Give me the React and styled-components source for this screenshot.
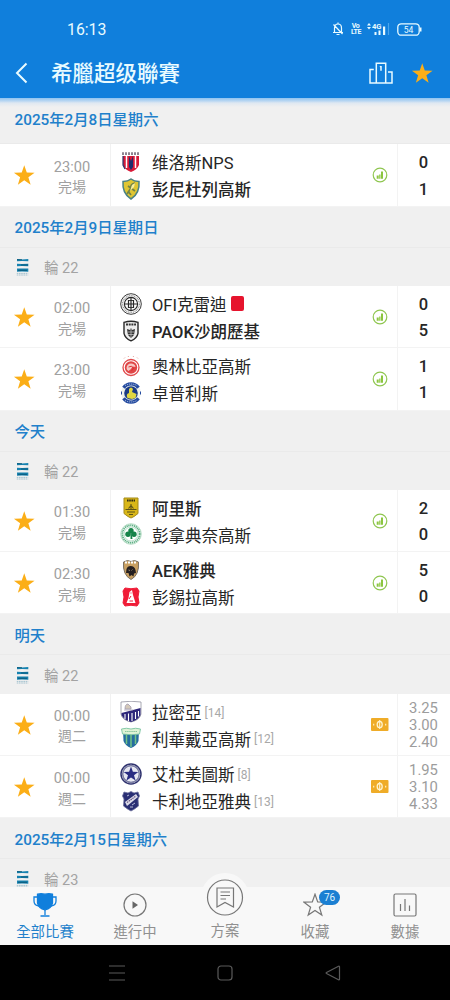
import React from 'react';

import styled, { createGlobalStyle } from 'styled-components';

const GlobalStyle = createGlobalStyle`
    * {
        box-sizing: border-box;
    }
    body {
        margin: 0;
        background: #000;
        font-family: Roboto, "Noto Sans CJK TC", sans-serif;
    }
    svg {
        display: block;
        flex: none;
    }
`;

const Phone = styled.div`
    display: flex;
    flex-direction: column;
    width: 450px;
    height: 1000px;
    overflow: hidden;
    background: #000;
`;

const Header = styled.header`
    flex: none;
    height: 98px;
    background: #107fdc;
    color: #e9fbff;
`;

const StatusBar = styled.div`
    display: flex;
    align-items: center;
    height: 58px;
    padding: 0 28px 0 67px;
`;

const Clock = styled.span`
    flex: 1;
    padding-top: 1px;
    font-size: 15.8px;
    line-height: 20px;
`;

const StatusIcons = styled.div`
    display: flex;
    align-items: center;
    gap: 7px;
`;

const VoLte = styled.span`
    width: 9px;
    font-size: 7px;
    line-height: 6.5px;
    font-weight: 700;
    text-align: center;
    letter-spacing: -0.4px;
`;

const TitleBar = styled.div`
    display: flex;
    align-items: center;
    height: 30px;
    padding: 0 17px 0 14px;
`;

const Title = styled.h1`
    flex: 1;
    margin: 0 0 0 22px;
    padding-top: 2px;
    font-size: 21.5px;
    line-height: 30px;
    font-weight: 500;
`;

const HeaderActions = styled.div`
    display: flex;
    align-items: center;
    gap: 18px;
`;

const List = styled.main`
    flex: none;
    height: 789px;
    overflow: hidden;
    background: #fff;
`;

const DateRow = styled.div`
    display: flex;
    align-items: center;
    height: ${props => (props.$first ? '46.4px' : '41px')};
    padding: ${props => (props.$first ? '0 14.5px 1px' : '3px 14.5px 0')};
    background: ${props => (props.$first
        ? 'linear-gradient(#8fc3f0 0, #b9d7f2 3px, #dfe8f1 5px, #f0f0f0 9px)'
        : '#f0f0f0')};
    border-bottom: 1px solid #eaeaea;
    color: #2180cb;
    font-size: 15.3px;
    line-height: 20px;
    font-weight: 500;
`;

const RoundRow = styled.div`
    display: flex;
    align-items: center;
    gap: 15px;
    height: 38.4px;
    padding-left: 16px;
    background: #f0f0f0;
    color: #a3a3a3;
    font-size: 14.5px;
    line-height: 16px;
`;

const RoundName = styled.span`
    padding-top: 4px;
`;

const Match = styled.div`
    display: flex;
    height: 62.25px;
    background: #fff;
    border-bottom: 1px solid #f3f3f3;
`;

const StarCell = styled.div`
    display: flex;
    align-items: center;
    justify-content: center;
    width: 48px;
    padding-top: 1px;
`;

const TimeCell = styled.div`
    display: flex;
    flex-direction: column;
    justify-content: center;
    width: 63px;
    padding: 4px 14px 0 0;
    border-right: 1px solid #f1f1f1;
    color: #a0a0a0;
    font-size: 14.6px;
    line-height: 20.5px;
    text-align: center;
`;

const State = styled.span`
    font-size: 14px;
`;

const Teams = styled.div`
    display: flex;
    flex: 1;
    flex-direction: column;
    justify-content: center;
    padding: 1px 0 0 9px;
`;

const Team = styled.div`
    display: flex;
    align-items: center;
    height: 26.7px;
    color: #262626;
    font-size: 16.5px;
    line-height: 24px;
    font-weight: ${props => (props.$winner ? 500 : 400)};
    white-space: nowrap;
`;

const TeamName = styled.span`
    margin-left: 10px;
    padding-top: 4.5px;
`;

const Rank = styled.span`
    margin-left: 3px;
    padding-top: 2px;
    color: #a8a8a8;
    font-size: 12px;
`;

const RedCard = styled.i`
    width: 13px;
    height: 15px;
    margin-left: 5px;
    border-radius: 2px;
    background: #e6142d;
`;

const IconCell = styled.div`
    display: flex;
    align-items: center;
    justify-content: center;
    width: 34px;
`;

const ResultCell = styled.div`
    display: flex;
    flex-direction: column;
    align-items: center;
    justify-content: center;
    width: 53px;
    padding: ${props => (props.$odds ? '2px 1px 0 0' : '3px 1px 0 0')};
    border-left: 1px solid #f3f3f3;
    color: ${props => (props.$odds ? '#9c9c9c' : '#262626')};
    font-size: ${props => (props.$odds ? '14.8px' : '16.5px')};
    line-height: ${props => (props.$odds ? '17px' : '26.5px')};
    font-weight: ${props => (props.$odds ? 400 : 500)};
`;

const TabBar = styled.nav`
    position: relative;
    display: flex;
    flex: none;
    height: 58px;
    background: #f8f8f8;
`;

const Tab = styled.div`
    display: flex;
    flex: 1;
    flex-direction: column;
    align-items: center;
    gap: 3px;
    padding-top: 6px;
    color: ${props => (props.$active ? '#2180cb' : '#909090')};
    font-size: 14.4px;
    line-height: 26px;
`;

const TabIcon = styled.div`
    position: relative;
    height: 25px;
`;

const Badge = styled.span`
    position: absolute;
    top: -3px;
    left: 16px;
    width: 21px;
    border-radius: 8px;
    background: #1b7fd2;
    color: #dff3ff;
    font-size: 10px;
    line-height: 15px;
    text-align: center;
`;

const RaisedIcon = styled.div`
    position: absolute;
    left: -24px;
    top: -20px;
    border-radius: 50%;
    background: #f8f8f8;
`;

const SystemBar = styled.footer`
    display: flex;
    flex: 1;
    align-items: center;
    justify-content: center;
    gap: 92px;
    background: #000;
`;

const STAR = 'M12 1.2l2.7 7.8 8.3.2-6.6 5 2.4 7.9-6.8-4.7-6.8 4.7 2.4-7.9-6.6-5 8.3-.2z';

function Star({ size = 22.5 }) {
    return (
        <svg width={size} height={size} viewBox='0 0 24 24'>
            <path d={STAR} fill='#fbae17' />
        </svg>
    );
}

function Podium() {
    return (
        <svg width='24' height='22' viewBox='0 0 24 22' fill='none' stroke='currentColor' strokeWidth='1.5'>
            <path d='M7.300 21V1.200h9.400V21M4.800 7.500H1V21h22V10h-4M12 4v4.800M12 4.300l-1 .8' />
        </svg>
    );
}

function StatsIcon() {
    return (
        <svg width='16' height='16' viewBox='0 0 16 16'>
            <circle cx='8' cy='8' r='6.8' fill='none' stroke='#8fc650' strokeWidth='1.2' />
            <path d='M4.700 8.600h2v3.200h-2zM7.200 7.400h1.300v4.400H7.200zM9 4.600h2v7.200H9z' fill='#8bc53f' />
        </svg>
    );
}

function CashIcon() {
    return (
        <svg width='19' height='13' viewBox='0 0 19 13'>
            <rect x='0' width='17.500' height='13' rx='1' fill='#efac28' />
            <ellipse cx='8.700' cy='6.500' rx='2.500' ry='3.200' fill='none' stroke='#fff4cf' strokeWidth='1.300' />
            <path d='M8.700 2v9M2.700 5.700v1.800M14.700 5.700v1.800' stroke='#fff4cf' strokeWidth='1.100' />
        </svg>
    );
}

function LeagueLogo() {
    return (
        <svg width='13' height='18' viewBox='0 0 13 18'>
            <path d='M1 1l5 .4L12.300 1v2.300L6 3l-5 .3zM1 5.800l5 .3 6.300-.3v2.400l-6.300-.3-5 .3zM1 10.600l5-.2 6.300.2v3.200l-6.300-.4-5 .4z' fill='#1682b0' />
            <path d='M1 1.700h5M5 7h7M2 12.300h9' stroke='#07506f' strokeWidth='.8' />
            <path d='M.8 15.400h11.400M.8 17h11.400' stroke='#9bbccb' strokeWidth='.9' strokeDasharray='1.6 .6' />
        </svg>
    );
}

const crests = {
    volos: (
        <>
            <path d='M3 5h16v9q-2 5-8 7-6-2-8-7z' fill='#d81a38' />
            <path d='M6.500 5v12M15.500 5v12' stroke='#fff' strokeWidth='1.500' />
            <path d='M9 5l2 5 2-5v11l-2 3-2-3z' fill='#1e2d6c' />
            <path d='M3 5v9l2 4' stroke='#28366d' strokeWidth='1.2' fill='none' />
            <path d='M2 2.700h18' stroke='#8d8490' strokeWidth='2.800' strokeDasharray='2 1' />
        </>
    ),
    panetolikos: (
        <>
            <path d='M3 3.500q5-.2 8-2.500 3 2.300 8 2.500 1 12-8 17.500-9-5.500-8-17.500z' fill='#dfc632' stroke='#4a8283' strokeWidth='1.500' />
            <path d='M15 5q-5 1-4 5l-4 6M8 8l7 5M8 13l3 4' stroke='#718347' strokeWidth='1.700' fill='none' />
            <path d='M12 7l3-2-1 4-4 4z' fill='#f7f0a0' />
        </>
    ),
    ofi: (
        <g fill='none' stroke='#272727'>
            <circle cx='11' cy='11' r='10.300' strokeWidth='.9' />
            <circle cx='11' cy='11' r='8.400' strokeWidth='1.400' strokeDasharray='1 .7' stroke='#999' />
            <circle cx='11' cy='11' r='6.600' strokeWidth='1.100' />
            <path d='M11 5v12M8.500 7v8M13.500 7v8M5 11h12' strokeWidth='1.200' />
            <path d='M8.500 7.500h5M8.500 14.500h5' strokeWidth='.9' />
        </g>
    ),
    paok: (
        <>
            <path d='M4 2.300q7-2.200 14 0v11q-1 5-7 7.500-6-2.500-7-7.500z' fill='#eee' stroke='#292929' strokeWidth='1.400' />
            <path d='M6 4.500h10' stroke='#333' strokeWidth='2.200' strokeDasharray='2 .7' />
            <path d='M7 9l3 1 1-2 1 2 3-1-1 6-3 3-3-3z' fill='#333' />
            <path d='M8 12h6M8 14.500h6M11 9v9' stroke='#ccc' strokeWidth='.7' />
        </>
    ),
    olympiacos: (
        <>
            <circle cx='11' cy='12.500' r='8' fill='#fff' stroke='#e0484a' strokeWidth='1.300' />
            <circle cx='11' cy='12.500' r='6.200' fill='#e04646' />
            <path d='M6.500 13q.5-4.500 4.500-4.500t4.500 3.500l-3-.5-1.500 2.500-2.500 2q-2-1-2-3z' fill='#f6c9c5' />
            <path d='M8.500 12q3-2 5 1l-2 3' stroke='#dc3137' fill='none' />
            <path d='M4 3.500l1-1M8 2l.7-1M13 1l.8 1M17 2.500l1 1' stroke='#e8a7a0' />
        </>
    ),
    asteras: (
        <>
            <circle cx='11' cy='11' r='10' fill='#eef2ed' />
            <path d='M3.600 5.800a9 9 0 0 1 14.800 0M3.600 16.200a9 9 0 0 0 14.800 0' fill='none' stroke='#244ba0' strokeWidth='3.400' />
            <path d='M1.500 9.500v3M20.500 9.500v3' stroke='#244ba0' />
            <circle cx='11' cy='11' r='6.800' fill='#193a85' />
            <path d='M7.500 16q-2-4 1.500-5V7q2-3 4 0l-1 3 4.500 2-1 4-3.500 1z' fill='#e0d741' />
            <path d='M5 3.500q6-3 12 0M5 18.500q6 3 12 0' stroke='#c6d2e9' strokeDasharray='1 1' fill='none' />
        </>
    ),
    aris: (
        <>
            <path d='M4 1h14v15.500l-4 3-3 1.500-3-1.500-4-3z' fill='#d9b719' stroke='#a38a1b' />
            <path d='M7 3.500h8' stroke='#302d13' strokeWidth='1.800' strokeDasharray='1.600 .6' />
            <path d='M5.500 12.500h11M11 7v5M8.500 11.500l2.500-3 2.500 3M7 15h8M9 17.500h4' stroke='#5b5218' strokeWidth='1.100' fill='none' />
        </>
    ),
    panathinaikos: (
        <>
            <circle cx='11' cy='11' r='10.300' fill='#fff' stroke='#a6d4b8' strokeWidth='.8' />
            <circle cx='11' cy='11' r='8.700' fill='none' stroke='#5fb186' strokeWidth='1.900' strokeDasharray='1.300 .6' />
            <circle cx='11' cy='11' r='7' fill='#fff' stroke='#8cc7a6' strokeWidth='.6' />
            <g fill='#168349'>
                <circle cx='11' cy='7.800' r='2.700' />
                <circle cx='8' cy='11.200' r='2.700' />
                <circle cx='14' cy='11.200' r='2.700' />
                <path d='M10.500 10h1l1 6h-2z' />
            </g>
        </>
    ),
    aek: (
        <>
            <path d='M3.500 3l4-1.500 3.500 1 3.500-1 4 1.500q1 13-7.500 17.500-8.500-4.500-7.500-17.500z' fill='#c9a061' stroke='#7a6f62' />
            <path d='M5 3.500h12' stroke='#fff' strokeWidth='2' strokeDasharray='2 1' />
            <path d='M6.500 10q1-3 4-3 4 0 5 4l.5 3-2 .5-.5 3-2-1.500-2 1.500-1-3.500-2.500 0z' fill='#241f20' />
            <path d='M8.500 11l1.500.5M12.500 10.500l-1 1' stroke='#ccb58c' strokeWidth='.7' />
        </>
    ),
    panserraikos: (
        <>
            <path d='M5 2q6 1.500 12 0l2 3-1 6 1 6-2 3q-6-1.500-12 0l-2-3 1-6-1-6z' fill='#f01c37' stroke='#f01c37' strokeLinejoin='round' />
            <path d='M9.500 6l2.500-2 1 5 2.500 8h-9l2-5z' fill='#fff' />
            <path d='M9 13l2-3M9.500 15h3.500M10.500 7h1' stroke='#ee1c37' />
        </>
    ),
    lamia: (
        <>
            <path d='M1 1q10-1.500 20 0v12q-1 6-10 8-9-2-10-8z' fill='#fff' stroke='#9292a0' strokeWidth='.8' />
            <path d='M1.500 12l19-5v7q-2 5-9.500 7-7.500-2-9.500-7z' fill='#2d267b' />
            <path d='M5 13v5M8.500 12.500v7.500M12 12v8M15.500 11v7M18.500 10v5.500' stroke='#fff' strokeWidth='1.100' />
            <path d='M5 8q0-5 3-5l3 3v2zM4 9h9' stroke='#a29cb0' fill='#d4c8b8' strokeWidth='.8' />
        </>
    ),
    levadiakos: (
        <>
            <path d='M3 3h16l-.5 11q-1.500 4.500-7.500 7-6-2.500-7.500-7z' fill='#256d9e' />
            <path d='M1.500 2q5-1.500 9.500 0 4.500-1.500 9.500 0L19.500 7q-8 1.500-17 0z' fill='#dff3d6' stroke='#7bc4a1' strokeWidth='.9' />
            <path d='M6.500 8v9M11 8v12M15.500 8v9' stroke='#72c486' strokeWidth='1.500' />
            <path d='M5 4.500h12' stroke='#8bc59d' strokeDasharray='1.500 .6' />
        </>
    ),
    atromitos: (
        <>
            <circle cx='11' cy='11' r='10' fill='#fff' stroke='#30336f' strokeWidth='1.500' />
            <circle cx='11' cy='11' r='8.300' fill='none' stroke='#7d80a5' strokeWidth='1.700' />
            <circle cx='11' cy='11' r='7.200' fill='#e6e7f1' />
            <path d='M11 3.500l1.900 5.200 5.400.2-4.300 3.400 1.600 5.300-4.600-3.100-4.600 3.100L8 12.300 3.700 8.900l5.400-.2z' fill='#292c82' />
        </>
    ),
    kallithea: (
        <>
            <path d='M4 2l4 1 3-1.500L14 3l4-1 1.500 4-1.500 3 .5 7-4 3-3.500 2-3.500-2-4-3L4 9 2.500 6z' fill='#292e73' stroke='#696d9b' strokeWidth='.8' />
            <path d='M5 12L16 4l2 3-11 9z' fill='#dcdce9' />
            <path d='M7 12.500l9-6.500' stroke='#6a5582' strokeWidth='1.200' strokeDasharray='1.500 .7' />
            <path d='M7 6l2-1M12 15l3-2M10 17h3' stroke='#b7bbd8' />
        </>
    ),
};

function Crest({ name }) {
    return (
        <svg width='22' height='22' viewBox='0 0 22 22'>{crests[name]}</svg>
    );
}

const sections = [
    {
        date: '2025年2月8日星期六',
        matches: [
            { time: '23:00', state: '完場', home: { name: '维洛斯NPS', crest: 'volos' }, away: { name: '彭尼杜列高斯', crest: 'panetolikos', winner: true }, score: [0, 1] },
        ],
    },
    {
        date: '2025年2月9日星期日',
        round: '輪 22',
        matches: [
            { time: '02:00', state: '完場', home: { name: 'OFI克雷迪', crest: 'ofi', red: true }, away: { name: 'PAOK沙朗歷基', crest: 'paok', winner: true }, score: [0, 5] },
            { time: '23:00', state: '完場', home: { name: '奧林比亞高斯', crest: 'olympiacos' }, away: { name: '卓普利斯', crest: 'asteras' }, score: [1, 1] },
        ],
    },
    {
        date: '今天',
        round: '輪 22',
        matches: [
            { time: '01:30', state: '完場', home: { name: '阿里斯', crest: 'aris', winner: true }, away: { name: '彭拿典奈高斯', crest: 'panathinaikos' }, score: [2, 0] },
            { time: '02:30', state: '完場', home: { name: 'AEK雅典', crest: 'aek', winner: true }, away: { name: '彭錫拉高斯', crest: 'panserraikos' }, score: [5, 0] },
        ],
    },
    {
        date: '明天',
        round: '輪 22',
        matches: [
            { time: '00:00', state: '週二', home: { name: '拉密亞', crest: 'lamia', rank: 14 }, away: { name: '利華戴亞高斯', crest: 'levadiakos', rank: 12 }, odds: ['3.25', '3.00', '2.40'] },
            { time: '00:00', state: '週二', home: { name: '艾杜美圖斯', crest: 'atromitos', rank: 8 }, away: { name: '卡利地亞雅典', crest: 'kallithea', rank: 13 }, odds: ['1.95', '3.10', '4.33'] },
        ],
    },
    { date: '2025年2月15日星期六', round: '輪 23', matches: [] },
];

function TeamLine({ team }) {
    return (
        <Team $winner={team.winner}>
            <Crest name={team.crest} />
            <TeamName>{team.name}</TeamName>
            {team.red && <RedCard />}
            {team.rank && <Rank>[{team.rank}]</Rank>}
        </Team>
    );
}

function MatchRow({ match }) {
    const results = match.odds || match.score;
    return (
        <Match>
            <StarCell><Star /></StarCell>
            <TimeCell>
                <span>{match.time}</span>
                <State>{match.state}</State>
            </TimeCell>
            <Teams>
                <TeamLine team={match.home} />
                <TeamLine team={match.away} />
            </Teams>
            <IconCell>{match.odds ? <CashIcon /> : <StatsIcon />}</IconCell>
            <ResultCell $odds={!!match.odds}>
                {results.map((value, i) => <span key={i}>{value}</span>)}
            </ResultCell>
        </Match>
    );
}

function PhoneStatus() {
    return (
        <StatusBar>
            <Clock>16:13</Clock>
            <StatusIcons>
                <svg width='12' height='14' viewBox='0 0 12 14' fill='none' stroke='currentColor' strokeWidth='1.2'>
                    <path d='M2.500 10V6q0-4 3.500-4t3.500 4v4M1 10.500h10M4.500 12.500h3M6 .5V2M1.500 2.500l9 9.500' />
                </svg>
                <VoLte>Vo<br />LTE</VoLte>
                <svg width='23' height='14' viewBox='0 0 23 14'>
                    <path d='M0 3.500L2 1l2 2.500zM0 5h4L2 7.500z' fill='currentColor' />
                    <text x='5' y='6.800' fontSize='8' fontWeight='700' textLength='9.500' lengthAdjust='spacingAndGlyphs' fill='currentColor'>4G</text>
                    <path d='M7.500 10h2v3h-2zM11.500 8.500h2V13h-2zM16 4.500h2.200V13H16z' fill='currentColor' />
                    <path d='M21.500 1v12' stroke='#4aa4ec' strokeWidth='1.200' />
                </svg>
                <svg width='25' height='13' viewBox='0 0 25 13'>
                    <rect x='.8' y='.8' width='21.400' height='11.400' rx='3.500' fill='none' stroke='currentColor' strokeWidth='1.300' />
                    <path d='M23.700 4.500v4' stroke='currentColor' strokeWidth='1.600' />
                    <text x='11.500' y='9.500' fontSize='8.500' textAnchor='middle' fill='currentColor'>54</text>
                </svg>
            </StatusIcons>
        </StatusBar>
    );
}

function BottomTabs() {
    return (
        <TabBar>
            <Tab $active>
                <TabIcon>
                    <svg width='24' height='24' viewBox='0 0 24 24' fill='none' stroke='#107fdc' strokeWidth='1.300'>
                        <path d='M4.500 1.200Q8 .2 12 1.200q4-1 7.500 0V10q-1 5-7.500 7-6.500-2-7.500-7z' fill='#107fdc' />
                        <path d='M4.500 4H1v4q0 4.500 5 5M19.500 4H23v4q0 4.500-5 5M12 17v5M7.500 23h9' />
                    </svg>
                </TabIcon>
                全部比賽
            </Tab>
            <Tab>
                <TabIcon>
                    <svg width='24' height='24' viewBox='0 0 24 24'>
                        <circle cx='12' cy='12' r='11' fill='none' stroke='#777' strokeWidth='1.200' />
                        <path d='M9.500 8.300l5.500 3.700-5.500 3.700z' fill='#666' />
                    </svg>
                </TabIcon>
                進行中
            </Tab>
            <Tab>
                <TabIcon>
                    <RaisedIcon>
                        <svg width='48' height='48' viewBox='0 0 48 48' fill='none' stroke='#777' strokeWidth='1.200'>
                            <circle cx='24' cy='24.500' r='17.500' />
                            <path d='M16 15h16.500v19L24 29.500 16 34zM19.500 19H29M19.500 22.500H29M19.500 26H25' />
                        </svg>
                    </RaisedIcon>
                </TabIcon>
                方案
            </Tab>
            <Tab>
                <TabIcon>
                    <svg width='24' height='24' viewBox='0 0 24 24'>
                        <path d={STAR} fill='none' stroke='#777' strokeWidth='1.200' />
                    </svg>
                    <Badge>76</Badge>
                </TabIcon>
                收藏
            </Tab>
            <Tab>
                <TabIcon>
                    <svg width='24' height='24' viewBox='0 0 24 24' fill='none' stroke='#777' strokeWidth='1.200'>
                        <rect x='1' y='1' width='22' height='22' rx='1.500' />
                        <path d='M7.500 11v7M12 6v12M16.500 12.500V18' />
                    </svg>
                </TabIcon>
                數據
            </Tab>
        </TabBar>
    );
}

function App() {
    return (
        <>
            <GlobalStyle />
            <Phone>
                <Header>
                    <PhoneStatus />
                    <TitleBar>
                        <svg width='15' height='22' viewBox='0 0 15 22' fill='none' stroke='currentColor' strokeWidth='2'>
                            <path d='M12.500 1.500L3 11l9.500 9.500' />
                        </svg>
                        <Title>希臘超级聯賽</Title>
                        <HeaderActions>
                            <Podium />
                            <Star />
                        </HeaderActions>
                    </TitleBar>
                </Header>
                <List>
                    {sections.map((section, i) => (
                        <React.Fragment key={section.date}>
                            <DateRow $first={i === 0}>{section.date}</DateRow>
                            {section.round && (
                                <RoundRow>
                                    <LeagueLogo />
                                    <RoundName>{section.round}</RoundName>
                                </RoundRow>
                            )}
                            {section.matches.map(match => (
                                <MatchRow key={match.home.name} match={match} />
                            ))}
                        </React.Fragment>
                    ))}
                </List>
                <BottomTabs />
                <SystemBar>
                    <svg width='16' height='16' viewBox='0 0 16 16' stroke='#5a5a5a' strokeWidth='1.200'>
                        <path d='M0 1h16M0 8h16M0 15h16' />
                    </svg>
                    <svg width='16' height='16' viewBox='0 0 16 16' fill='none' stroke='#5a5a5a' strokeWidth='1.200'>
                        <rect x='1' y='1' width='14' height='14' rx='3' />
                    </svg>
                    <svg width='16' height='16' viewBox='0 0 16 16' fill='none' stroke='#5a5a5a' strokeWidth='1.200'>
                        <path d='M14.500 1.800v12.400q0 1-1 .5L1.500 8.600q-.8-.6 0-1.200l12-6.100q1-.5 1 .5z' />
                    </svg>
                </SystemBar>
            </Phone>
        </>
    );
}
export default App;
